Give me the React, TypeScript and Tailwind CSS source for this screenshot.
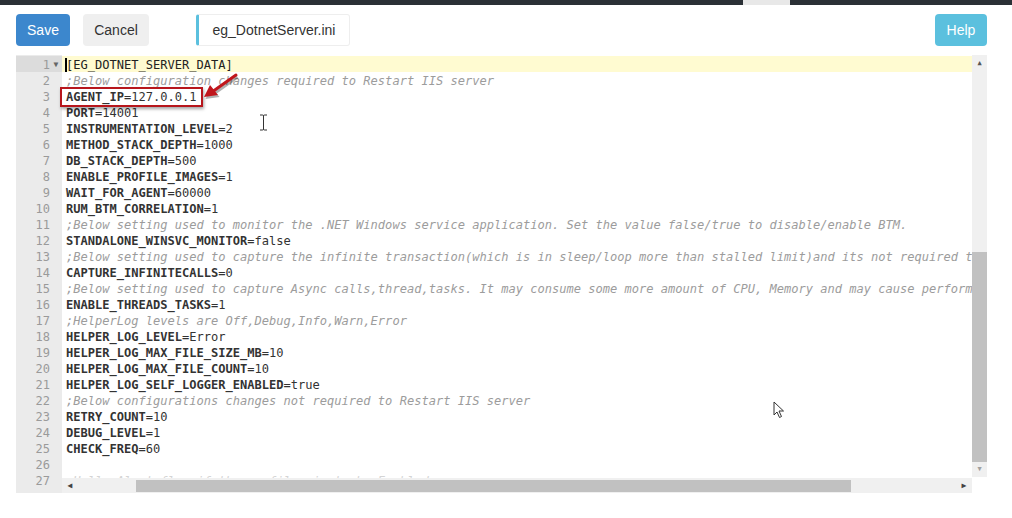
import React from "react";

type Line = { key?: string; value?: string; comment?: string; section?: string };

const lines: Line[] = [
  { section: "[EG_DOTNET_SERVER_DATA]" },
  { comment: ";Below configuration changes required to Restart IIS server" },
  { key: "AGENT_IP", value: "127.0.0.1" },
  { key: "PORT", value: "14001" },
  { key: "INSTRUMENTATION_LEVEL", value: "2" },
  { key: "METHOD_STACK_DEPTH", value: "1000" },
  { key: "DB_STACK_DEPTH", value: "500" },
  { key: "ENABLE_PROFILE_IMAGES", value: "1" },
  { key: "WAIT_FOR_AGENT", value: "60000" },
  { key: "RUM_BTM_CORRELATION", value: "1" },
  { comment: ";Below setting used to monitor the .NET Windows service application. Set the value false/true to disable/enable BTM." },
  { key: "STANDALONE_WINSVC_MONITOR", value: "false" },
  { comment: ";Below setting used to capture the infinite transaction(which is in sleep/loop more than stalled limit)and its not required to capture" },
  { key: "CAPTURE_INFINITECALLS", value: "0" },
  { comment: ";Below setting used to capture Async calls,thread,tasks. It may consume some more amount of CPU, Memory and may cause performance issue" },
  { key: "ENABLE_THREADS_TASKS", value: "1" },
  { comment: ";HelperLog levels are Off,Debug,Info,Warn,Error" },
  { key: "HELPER_LOG_LEVEL", value: "Error" },
  { key: "HELPER_LOG_MAX_FILE_SIZE_MB", value: "10" },
  { key: "HELPER_LOG_MAX_FILE_COUNT", value: "10" },
  { key: "HELPER_LOG_SELF_LOGGER_ENABLED", value: "true" },
  { comment: ";Below configurations changes not required to Restart IIS server" },
  { key: "RETRY_COUNT", value: "10" },
  { key: "DEBUG_LEVEL", value: "1" },
  { key: "CHECK_FREQ", value: "60" },
  {},
  { comment: ";Hello Alert flag if the profiler is to be Enabled" },
];

const mono = { fontFamily: '"DejaVu Sans Mono", "Liberation Mono", monospace' };
const sans = { fontFamily: '"Liberation Sans", Arial, sans-serif' };

export default function App() {
  return (
    <div className="relative w-[1012px] h-[518px] bg-white overflow-hidden" style={sans}>
      {/* top dark strip */}
      <div className="h-[5px] bg-[#2b3036] relative">
        <div className="absolute left-[743px] top-0 w-[47px] h-[5px] bg-[#e8e8e8]" />
      </div>

      {/* toolbar */}
      <div className="flex items-center mt-[9px] pl-[16px] pr-[25px] h-[32px]">
        <button className="h-[32px] w-[54px] rounded-[4px] bg-[#3c87cd] text-white text-[14px]">Save</button>
        <button className="ml-[13px] h-[32px] w-[66px] rounded-[4px] bg-[#efefef] text-[#333] text-[14px]">Cancel</button>
        <div className="ml-[47px] h-[32px] w-[154px] rounded-[3px] border border-[#eeeeee] border-l-[3px] border-l-[#5bc0de] flex items-center justify-center text-[14px] text-[#333]">
          eg_DotnetServer.ini
        </div>
        <div className="flex-1" />
        <button className="h-[32px] w-[52px] rounded-[4px] bg-[#5bc0de] text-white text-[14px]">Help</button>
      </div>

      {/* editor */}
      <div className="relative mt-[9px] ml-[16px] w-[971px] h-[438px] flex" style={mono}>
        <div className="w-[46px] bg-[#ebebeb] pt-[1px] text-[12px] text-[#9a9a9a]">
          {lines.map((_, i) => (
            <div key={i} className={`h-[16px] leading-[16px] pt-[1px] flex justify-end ${i === 0 ? "bg-[#dcdcdc]" : ""}`}>
              <span>{i + 1}</span>
              <span className="w-[12px] flex items-center justify-center text-[8px] text-[#666]">{i === 0 ? "▼" : ""}</span>
            </div>
          ))}
        </div>
        <div className="relative flex-1 overflow-hidden pt-[1px] text-[12.06px] whitespace-pre">
          {lines.map((l, i) => (
            <div key={i} className={`h-[16px] leading-[16px] pt-[1px] pl-[4px] pr-[15px] ${i === 0 ? "bg-[#fffbd1]" : ""}`}>
              {l.section && <span className="text-[#222]">{l.section}</span>}
              {l.comment && <span className={`italic ${i === 26 ? "text-[#d4d4d4]" : "text-[#9c9c9c]"}`}>{l.comment}</span>}
              {l.key && (
                <>
                  <span className="font-bold text-[#333]">{l.key}</span>
                  <span className="text-[#333]">={l.value}</span>
                </>
              )}
            </div>
          ))}
          {/* text cursor */}
          <div className="absolute left-[3px] top-[3px] w-[2px] h-[14px] bg-black" />

          {/* vertical scrollbar */}
          <div className="absolute right-0 top-0 w-[15px] h-[422px] bg-[#f0f0f0] flex flex-col items-center">
            <div className="h-[16px] flex items-center justify-center text-[7px] text-[#555]">▲</div>
            <div className="flex-1" />
            <div className="w-[15px] h-[210px] bg-[#c1c1c1]" />
            <div className="h-[15px] flex items-center justify-center text-[7px] text-[#a0a0a0]">▼</div>
          </div>
          {/* horizontal scrollbar */}
          <div className="absolute left-0 bottom-0 w-[910px] h-[15px] bg-[#f0f0f0] flex items-center">
            <div className="w-[16px] flex items-center justify-center text-[8px] text-[#444]">◀</div>
            <div className="w-[58px]" />
            <div className="w-[715px] h-[12px] bg-[#c1c1c1]" />
            <div className="flex-1" />
            <div className="w-[16px] flex items-center justify-center text-[8px] text-[#444]">▶</div>
          </div>
          {/* corner */}
          <div className="absolute right-0 bottom-0 w-[15px] h-[16px] bg-white" />
        </div>
      </div>

      {/* red highlight box */}
      <div className="absolute left-[60px] top-[87px] w-[143px] h-[20px] border-2 border-[#b7161c] shadow-[1px_2px_3px_rgba(0,0,0,0.35)]" />

      {/* red arrow */}
      <svg className="absolute left-[198px] top-[70px]" width="50" height="40" viewBox="0 0 50 40">
        <g transform="translate(1.5,2)" opacity="0.3">
          <line x1="38" y1="5" x2="14" y2="22" stroke="#000" strokeWidth="3" />
          <polygon points="6,27 12,15 20,25" fill="#000" />
        </g>
        <line x1="38" y1="5" x2="14" y2="22" stroke="#c0161c" strokeWidth="3" strokeLinecap="round" />
        <polygon points="6,27 12,15 20,25" fill="#c0161c" />
      </svg>

      {/* I-beam cursor */}
      <svg className="absolute left-[259px] top-[114px]" width="9" height="17" viewBox="0 0 9 17">
        <path d="M1 1 H3.5 Q4.5 1 4.5 2 V15 Q4.5 16 3.5 16 H1 M8 1 H5.5 Q4.5 1 4.5 2 M4.5 15 Q4.5 16 5.5 16 H8" fill="none" stroke="#333" strokeWidth="1" />
      </svg>

      {/* mouse pointer */}
      <svg className="absolute left-[773px] top-[401px]" width="12" height="18" viewBox="0 0 12 18">
        <path d="M1 1 L1 14 L4 11 L6.5 16.5 L8.5 15.5 L6 10 L10.5 10 Z" fill="#fff" stroke="#333" strokeWidth="1" strokeLinejoin="round" />
      </svg>
    </div>
  );
}
